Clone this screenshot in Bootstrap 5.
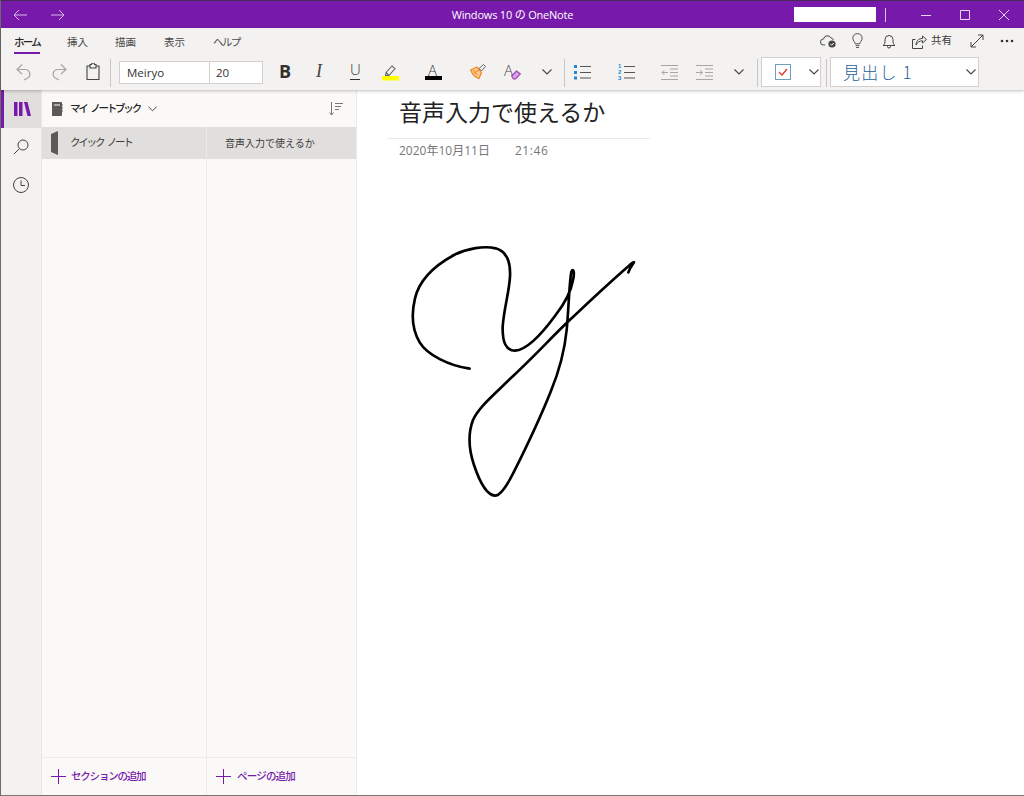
<!DOCTYPE html>
<html lang="ja">
<head>
  <meta charset="UTF-8" />
  <meta name="viewport" content="width=device-width, initial-scale=1" />
  <title>Windows 10 の OneNote</title>
  <link href="https://cdn.jsdelivr.net/npm/bootstrap@5.3.0/dist/css/bootstrap.min.css" rel="stylesheet" />
  <style>
    html, body { height: 100%; overflow: hidden; }
    body { font-family: "Open Sans", "Noto Sans CJK JP", sans-serif; font-size: 11px; color: #323130; background: #fff; }
    .app-win { width: 1024px; height: 796px; border-left: 1px solid #6d6a68; border-top: 1px solid #4b2a5a; border-bottom: 1px solid #777; }
    .title-bar { height: 27px; background: #7719aa; color: #fff; position: relative; flex: none; }
    .title-text { position: absolute; left: 0; right: 0; top: 6px; text-align: center; font-size: 11px; line-height: 16px; letter-spacing: -.2px; }
    .back-btn { width: 38px; justify-content: center; }
    .user-box { width: 82px; height: 15px; background: #fff; margin-right: 9px; }
    .user-sep { width: 1px; height: 14px; background: #d9c3e6; margin-right: 20px; }
    .win-btn { width: 39px; justify-content: center; }
    .ribbon { height: 62px; background: #f3f2f1; box-shadow: 0 1px 3px rgba(0,0,0,.25); position: relative; z-index: 2; flex: none; }
    .tab-row { height: 28px; padding-left: 13px; }
    .tab-item { font-size: 10.5px; line-height: 14px; color: #4a4948; margin-right: 27px; padding-top: 7px; height: 26px; }
    .tab-wide { margin-right: 28px; }
    .tab-on { color: #252423; font-weight: 500; border-bottom: 2px solid #7719aa; }
    .kana-tight { letter-spacing: -1.7px; }
    .tool-area { position: relative; height: 34px; }
    .tool-ico { position: absolute; top: 0; }
    .font-box { background: #fff; border: 1px solid #d2d0ce; height: 23px; width: 144px; font-size: 11.5px; }
    .font-name { width: 90px; border-right: 1px solid #d2d0ce; padding-left: 7px; line-height: 21px; }
    .font-size-cell { padding-left: 6px; line-height: 21px; }
    .rib-sep { width: 1px; height: 28px; background: #c8c6c4; }
    .style-box { background: #fff; border: 1px solid #d2d0ce; height: 30px; }
    .head-text { font-family: "Noto Sans CJK JP", sans-serif; font-size: 17px; font-weight: 300; color: #1f5f96; letter-spacing: 1.2px; }
    .side-rail { width: 40px; background: #f3f2f1; flex: none; }
    .rail-cell { height: 38px; justify-content: center; }
    .rail-on { background: #e1dfdd; border-left: 3px solid #7719aa; }
    .nav-pane { width: 316px; background: #faf9f8; border-left: 1px solid #e9e7e5; border-right: 1px solid #edebe9; flex: none; }
    .pane-top { height: 37px; padding-left: 9px; padding-right: 13px; }
    .book-name { font-size: 10.5px; font-weight: 500; color: #252423; margin-left: 7px; margin-right: 8px; letter-spacing: -2.2px; word-spacing: 3px; }
    .col-sec { width: 165px; border-right: 1px solid #edebe9; }
    .col-pg { flex: 1; }
    .row-on { height: 32px; background: #e1dfdd; }
    .row-text { font-size: 10px; color: #3b3a39; }
    .sec-text { margin-left: 10px; font-size: 10.5px; letter-spacing: -2.2px; word-spacing: 3px; }
    .add-row { height: 38px; border-top: 1px solid #edebe9; color: #7719aa; font-size: 10.5px; font-weight: 500; padding-left: 9px; }
    .note-area { position: relative; background: #fff; flex: 1; }
    .page-title { position: absolute; left: 42px; top: 4px; font-family: "Noto Sans CJK JP", sans-serif; font-size: 23px; line-height: 34px; color: #222; }
    .title-rule { position: absolute; left: 31px; top: 48px; width: 262px; height: 1px; background: #e8e8e8; }
    .page-date { position: absolute; left: 42px; top: 53px; font-size: 12px; line-height: 16px; color: #777; }
    .page-date span { margin-left: 25px; letter-spacing: .6px; }
    .ink-layer { position: absolute; left: 42px; top: 145px; }
  </style>
</head>
<body>
<div class="app-win d-flex flex-column">

  <!-- Title bar -->
  <div class="title-bar d-flex align-items-center">
    <div class="title-text">Windows 10 の OneNote</div>
    <div class="d-flex back-btn"><svg width="14" height="12" viewBox="0 0 14 12" fill="none" stroke="#d8b9ea" stroke-width="1"><path d="M14 6H1M6 1 1 6l5 5"/></svg></div>
    <div class="d-flex back-btn"><svg width="14" height="12" viewBox="0 0 14 12" fill="none" stroke="#d8b9ea" stroke-width="1"><path d="M0 6h13M8 1l5 5-5 5"/></svg></div>
    <div class="ms-auto d-flex align-items-center" style="margin-right:1px">
      <div class="user-box"></div>
      <div class="user-sep"></div>
      <div class="d-flex win-btn"><svg width="10" height="10" viewBox="0 0 10 10" stroke="#e6d6ef" fill="none"><path d="M0 5.500h10"/></svg></div>
      <div class="d-flex win-btn"><svg width="10" height="10" viewBox="0 0 10 10" stroke="#e6d6ef" fill="none"><path d="M.5.500h9v9h-9z"/></svg></div>
      <div class="d-flex win-btn"><svg width="10" height="10" viewBox="0 0 10 10" stroke="#e6d6ef" fill="none"><path d="M0 0l10 10M10 0 0 10"/></svg></div>
    </div>
  </div>

  <!-- Ribbon -->
  <div class="ribbon">
    <div class="tab-row d-flex position-relative">
      <div class="tab-item tab-on kana-tight">ホーム</div>
      <div class="tab-item">挿入</div>
      <div class="tab-item tab-wide">描画</div>
      <div class="tab-item tab-wide">表示</div>
      <div class="tab-item kana-tight">ヘルプ</div>
      <div class="ms-auto d-flex align-items-center" style="height:26px">
        <svg style="margin-right:14px" width="17" height="16" viewBox="0 0 17 16" fill="none" stroke="#444" stroke-width="1"><path d="M5 12H3.500a3 3 0 0 1 0-6 4 4 0 0 1 7.500-1 3 3 0 0 1 2.500 2"/><circle cx="12" cy="11" r="3.600" fill="#444" stroke="none"/><path d="M10.300 11l1.300 1.300 2.200-2.400" stroke="#fff"/></svg>
        <svg style="margin-right:18px" width="13" height="16" viewBox="0 0 14 16" fill="none" stroke="#444"><path d="M4.500 11c0-2-2.500-3-2.500-6a5 5 0 0 1 10 0c0 3-2.500 4-2.500 6zM5 13h4M5.500 15h3"/></svg>
        <svg class="me-3" width="14" height="16" viewBox="0 0 14 16" fill="none" stroke="#444"><path d="M1 12.500c2-1 2-3 2-6a4 4 0 0 1 8 0c0 3 0 5 2 6zM5.500 12.500v1a1.500 1.500 0 0 0 3 0v-1"/></svg>
        <svg width="15" height="15" viewBox="0 0 15 15" fill="none" stroke="#444"><path d="M3.500 5.500H.5v9h10v-3M4 11c0-4 2.500-6.500 6.500-6.500V2l4 3.500-4 3.500V6.800C8 6.800 5.500 8 4 11z"/></svg>
        <span class="ms-1" style="font-size:10.5px;color:#3b3a39;margin-right:18px">共有</span>
        <svg style="margin-right:16px" width="14" height="14" viewBox="0 0 14 14" fill="none" stroke="#444"><path d="M1 13 13 1M8 1h5v5M1 8v5h5"/></svg>
        <svg style="margin-right:10px" width="14" height="4" viewBox="0 0 14 4" fill="#333"><circle cx="2" cy="2" r="1.300"/><circle cx="7" cy="2" r="1.300"/><circle cx="12" cy="2" r="1.300"/></svg>
      </div>
    </div>
    <div class="tool-area">
      <!-- undo / redo / clipboard -->
      <svg class="tool-ico" style="left:15px;top:7px" width="16" height="18" viewBox="0 0 16 18" fill="none" stroke="#a8a6a4" stroke-width="1.200"><path d="M6 1.500 1 6.500l5 4.500M1 6.500h8a4.700 4.700 0 0 1 3.500 8L8 17"/></svg>
      <svg class="tool-ico" style="left:50px;top:7px" width="16" height="18" viewBox="0 0 16 18" fill="none" stroke="#a8a6a4" stroke-width="1.200"><path d="M10 1.500l5 5-5 4.500M15 6.500H7a4.700 4.700 0 0 0-3.500 8L8 17"/></svg>
      <svg class="tool-ico" style="left:85px;top:7px" width="14" height="17" viewBox="0 0 14 17" fill="none" stroke="#444" stroke-width="1.100"><path d="M4 3H1v13.500h12V3h-3M4 1.500h1.500a1.500 1.500 0 0 1 3 0H10V5H4z"/></svg>
      <div class="rib-sep tool-ico" style="left:109px;top:3px"></div>
      <div class="font-box d-flex tool-ico" style="left:118px;top:5px">
        <div class="font-name">Meiryo</div>
        <div class="font-size-cell">20</div>
      </div>
      <b class="tool-ico" style="left:278px;top:3px;font-size:18px;line-height:24px;color:#323130">B</b>
      <i class="tool-ico" style="left:315px;top:3px;font-family:'Liberation Serif',serif;font-size:18px;line-height:24px;color:#444">I</i>
      <span class="tool-ico" style="left:349px;top:3px;font-size:15px;font-weight:300;line-height:20px;color:#323130">U</span>
      <div class="tool-ico" style="left:349px;top:23px;width:10px;height:1px;background:#323130"></div>
      <!-- highlighter -->
      <svg class="tool-ico" style="left:381px;top:8px" width="17" height="17" viewBox="0 0 17 17" fill="none"><path d="M4 8.500 10 2l3 2.500-6 7H3.500zM4 8.500l3 3" stroke="#666" stroke-width="1.100"/><rect x="0" y="12" width="17" height="4.500" fill="#ffff00"/></svg>
      <!-- font colour -->
      <span class="tool-ico" style="left:427px;top:5px;font-size:15px;font-weight:300;line-height:18px;color:#323130">A</span>
      <div class="tool-ico" style="left:424px;top:20px;width:17px;height:4px;background:#000"></div>
      <!-- format painter -->
      <svg class="tool-ico" style="left:469px;top:7px" width="17" height="17" viewBox="0 0 17 17" fill="none"><path d="M0.500 7 7 4l4.500 5.500-2.500 6C6 15 2.500 12 .5 7z" fill="#f9c78a" stroke="#ef8a22" stroke-width="1.200"/><path d="M4 10l5-3M3 7l4 5" stroke="#ef8a22"/><path d="M9 5.500l4.500-4 2 2-4 4.500z" fill="#eee" stroke="#666"/></svg>
      <!-- clear formatting -->
      <span class="tool-ico" style="left:503px;top:5px;font-size:15px;font-weight:300;line-height:18px;color:#444">A</span>
      <svg class="tool-ico" style="left:510px;top:14px" width="10" height="10" viewBox="0 0 10 10"><path d="M.7 6 5.500 1 9.300 4 4.500 9H2.500z" fill="#d9a3e5" stroke="#9b3fb5" stroke-width="1.100"/></svg>
      <svg class="tool-ico" style="left:541px;top:13px" width="10" height="6" viewBox="0 0 10 6" fill="none" stroke="#444" stroke-width="1.100"><path d="M.5.500 5 5 9.500.5"/></svg>
      <div class="rib-sep tool-ico" style="left:563px;top:3px"></div>
      <!-- bullets -->
      <svg class="tool-ico" style="left:573px;top:8px" width="17" height="16" viewBox="0 0 17 16"><g fill="#1e88d4"><rect x="0" y="1" width="3" height="3"/><rect x="0" y="7" width="3" height="3"/><rect x="0" y="12.500" width="3" height="3"/></g><path d="M6 2.500h11M6 8.500h11M6 14h11" stroke="#555"/></svg>
      <!-- numbering -->
      <svg class="tool-ico" style="left:617px;top:7px" width="17" height="18" viewBox="0 0 17 18"><g fill="#1e88d4" font-family="Liberation Sans" font-size="6" font-weight="700"><text x="0" y="5">1</text><text x="0" y="11">2</text><text x="0" y="17">3</text></g><path d="M6 3.500h11M6 9.500h11M6 15h11" stroke="#555"/></svg>
      <!-- outdent / indent -->
      <svg class="tool-ico" style="left:660px;top:8px" width="17" height="16" viewBox="0 0 17 16" fill="none" stroke="#a8a6a4"><path d="M0 1.500h17M9 5h8M9 8.500h8M9 12h8M0 15.500h17M7 8.500H1M3.500 6 1 8.500 3.500 11"/></svg>
      <svg class="tool-ico" style="left:695px;top:8px" width="17" height="16" viewBox="0 0 17 16" fill="none" stroke="#a8a6a4"><path d="M0 1.500h17M9 5h8M9 8.500h8M9 12h8M0 15.500h17M0 8.500h6M4 6l2.500 2.500L4 11"/></svg>
      <svg class="tool-ico" style="left:733px;top:13px" width="10" height="6" viewBox="0 0 10 6" fill="none" stroke="#444" stroke-width="1.100"><path d="M.5.500 5 5 9.500.5"/></svg>
      <div class="rib-sep tool-ico" style="left:756px;top:3px"></div>
      <!-- tag box -->
      <div class="style-box tool-ico" style="left:760px;top:1px;width:60px"></div>
      <svg class="tool-ico" style="left:774px;top:8px" width="16" height="16" viewBox="0 0 16 16" fill="none"><rect x=".5" y=".5" width="15" height="15" stroke="#6f9fc0"/><path d="M4 8l3 3 5-6" stroke="#e0352b" stroke-width="1.300"/></svg>
      <svg class="tool-ico" style="left:808px;top:13px" width="10" height="6" viewBox="0 0 10 6" fill="none" stroke="#444" stroke-width="1.100"><path d="M.5.500 5 5 9.500.5"/></svg>
      <div class="rib-sep tool-ico" style="left:825px;top:3px"></div>
      <!-- heading style -->
      <div class="style-box tool-ico d-flex align-items-center" style="left:829px;top:1px;width:149px;padding-left:12px">
        <span class="head-text">見出し 1</span>
      </div>
      <svg class="tool-ico" style="left:965px;top:13px" width="10" height="6" viewBox="0 0 10 6" fill="none" stroke="#444" stroke-width="1.100"><path d="M.5.500 5 5 9.500.5"/></svg>
    </div>
  </div>

  <!-- Main -->
  <div class="d-flex flex-grow-1" style="min-height:0">
    <div class="side-rail">
      <div class="rail-cell rail-on d-flex align-items-center">
        <svg width="17" height="14" viewBox="0 0 17 14" fill="#7719aa"><rect x="0" y="0" width="3.500" height="14"/><rect x="5" y="0" width="3.500" height="14"/><path d="M10 0h3.500L17 14h-3.500z"/></svg>
      </div>
      <div class="rail-cell d-flex align-items-center">
        <svg width="16" height="16" viewBox="0 0 16 16" fill="none" stroke="#444"><circle cx="10" cy="6" r="5"/><path d="M6.500 9.500 1 15"/></svg>
      </div>
      <div class="rail-cell d-flex align-items-center">
        <svg width="16" height="16" viewBox="0 0 16 16" fill="none" stroke="#444"><circle cx="8" cy="8" r="7.500"/><path d="M8 3.500V8.500h4"/></svg>
      </div>
    </div>

    <div class="nav-pane d-flex flex-column">
      <div class="pane-top d-flex align-items-center">
        <svg width="12" height="14" viewBox="0 0 12 14"><path d="M1 0h9a1 1 0 0 1 1 1v12a1 1 0 0 1-1 1H1z" fill="#5c5a58"/><path d="M3 3h6" stroke="#fff"/><path d="M11 3h1M11 6h1M11 9h1" stroke="#5c5a58"/></svg>
        <span class="book-name">マイ ノートブック</span>
        <svg width="9" height="6" viewBox="0 0 10 6" fill="none" stroke="#444" stroke-width="1.100"><path d="M.5.500 5 5 9.500.5"/></svg>
        <svg class="ms-auto" width="14" height="14" viewBox="0 0 14 14" fill="none" stroke="#777"><path d="M2.500 0v13M.5 10.500l2 2.500 2-2.500M6 1.500h8M6 4.500h6M6 7.500h4"/></svg>
      </div>
      <div class="d-flex flex-grow-1" style="min-height:0">
        <div class="col-sec d-flex flex-column">
          <div class="row-on d-flex align-items-center ps-2">
            <svg width="10" height="24" viewBox="0 0 10 24"><path d="M1 3 8 0v24l-7-3z" fill="#5c5a58"/></svg>
            <span class="row-text sec-text">クイック ノート</span>
          </div>
          <div class="flex-grow-1"></div>
          <div class="add-row d-flex align-items-center">
            <svg width="15" height="15" viewBox="0 0 15 15" stroke="#7719aa"><path d="M7.500 0v15M0 7.500h15"/></svg>
            <span style="margin-left:5px;letter-spacing:-1.200px">セクションの追加</span>
          </div>
        </div>
        <div class="col-pg d-flex flex-column">
          <div class="row-on d-flex align-items-center" style="padding-left:18px">
            <span class="row-text">音声入力で使えるか</span>
          </div>
          <div class="flex-grow-1"></div>
          <div class="add-row d-flex align-items-center">
            <svg width="15" height="15" viewBox="0 0 15 15" stroke="#7719aa"><path d="M7.500 0v15M0 7.500h15"/></svg>
            <span style="margin-left:6px;letter-spacing:-.8px">ページの追加</span>
          </div>
        </div>
      </div>
    </div>

    <div class="note-area">
      <div class="page-title">音声入力で使えるか</div>
      <div class="title-rule"></div>
      <div class="page-date">2020年10月11日<span>21:46</span></div>
      <!-- handwritten ink -->
      <svg class="ink-layer" width="250" height="270" viewBox="0 0 750 810" fill="none" stroke="#000" stroke-width="8" stroke-linecap="round" stroke-linejoin="round">
        <path d="M212 401C150 392 85 360 62 322C40 285 36 240 48 190C62 130 110 90 165 60C205 40 255 32 290 40C325 50 335 85 333 125C330 175 315 220 311 275C310 320 320 347 348 347C385 345 430 295 470 240C495 208 515 175 522 135C528 110 522 98 517 110C510 150 510 210 503 285C497 345 482 405 455 470C425 545 385 630 345 710C325 750 305 782 288 782C262 780 240 735 225 690C210 645 205 600 222 555C240 515 285 480 340 425C400 370 450 315 505 262C570 200 640 135 690 92C698 84 705 80 705 82C700 90 692 100 688 112"/>
      </svg>
    </div>
  </div>
</div>
<script src="https://cdn.jsdelivr.net/npm/bootstrap@5.3.0/dist/js/bootstrap.bundle.min.js"></script>
</body>
</html>
